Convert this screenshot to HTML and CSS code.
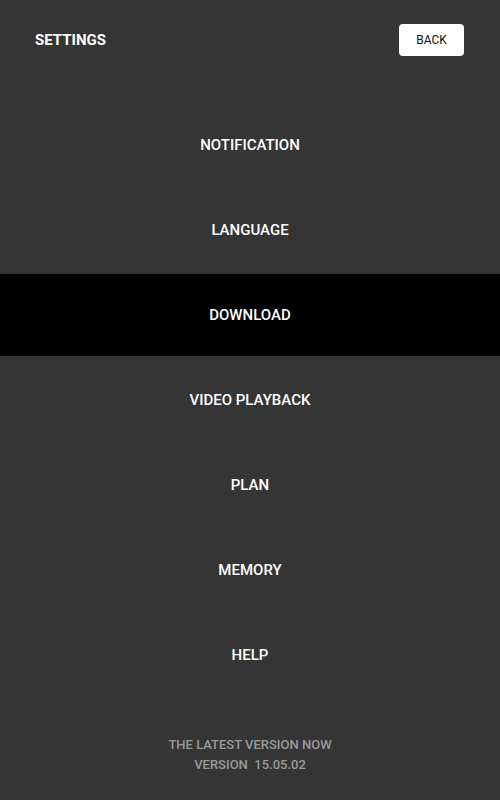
FILE: index.html
```html
<!DOCTYPE html>
<html>
<head>
<meta charset="utf-8">
<link rel="stylesheet" href="styles.css">
</head>
<body>
<div class="page">
  <header class="header">
    <div class="title">SETTINGS</div>
    <button class="back">BACK</button>
  </header>
  <nav class="menu">
    <div class="item">NOTIFICATION</div>
    <div class="item">LANGUAGE</div>
    <div class="item active">DOWNLOAD</div>
    <div class="item">VIDEO PLAYBACK</div>
    <div class="item">PLAN</div>
    <div class="item">MEMORY</div>
    <div class="item">HELP</div>
  </nav>
  <footer class="footer">
    <div>THE LATEST VERSION NOW</div>
    <div>VERSION&nbsp;&nbsp;15.05.02</div>
  </footer>
</div>
</body>
</html>
```
FILE: styles.css
```css
html, body {
  margin: 0;
  padding: 0;
  background: #353535;
}
body {
  font-family: Roboto, "Liberation Sans", sans-serif;
  width: 500px;
  height: 800px;
  overflow: hidden;
}
.page {
  display: flex;
  flex-direction: column;
}
.header {
  height: 80px;
  padding: 0 36px 0 35px;
  display: flex;
  align-items: center;
  justify-content: space-between;
}
.title {
  color: #ffffff;
  font-size: 15px;
  font-weight: 700;
}
.back {
  width: 65px;
  height: 32px;
  background: #ffffff;
  border: none;
  border-radius: 4px;
  font-family: Roboto, "Liberation Sans", sans-serif;
  font-size: 12px;
  color: #111;
  padding: 0;
}
.menu {
  margin-top: 24px;
  display: flex;
  flex-direction: column;
  gap: 3px;
}
.item {
  height: 82px;
  display: flex;
  align-items: center;
  justify-content: center;
  color: #ffffff;
  font-size: 15px;
  font-weight: 500;
}
.item.active {
  background: #000000;
}
.footer {
  margin-top: 39px;
  text-align: center;
  color: #9a9a9a;
  font-size: 13px;
  font-weight: 500;
  line-height: 20px;
}
```
